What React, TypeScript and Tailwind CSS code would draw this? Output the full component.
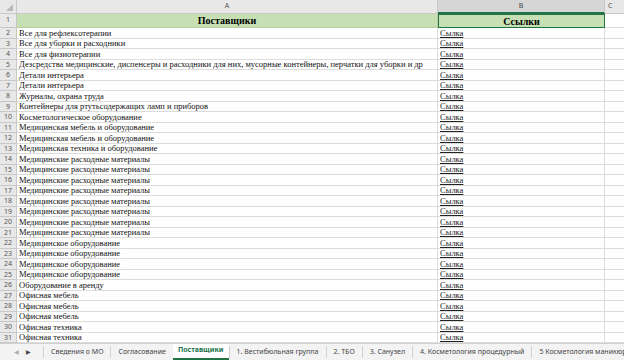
import React from "react";

const rows: string[] = [
  "Все для рефлексотерапии",
  "Все для уборки и расходники",
  "Все для физиотерапии",
  "Дезсредства медицинские, диспенсеры и расходники для них, мусорные контейнеры, перчатки для уборки и др",
  "Детали интерьера",
  "Детали интерьера",
  "Журналы, охрана труда",
  "Контейнеры для ртутьсодержащих ламп и приборов",
  "Косметологическое оборудование",
  "Медицинская мебель и оборудование",
  "Медицинская мебель и оборудование",
  "Медицинская техника и оборудование",
  "Медицинские расходные материалы",
  "Медицинские расходные материалы",
  "Медицинские расходные материалы",
  "Медицинские расходные материалы",
  "Медицинские расходные материалы",
  "Медицинские расходные материалы",
  "Медицинские расходные материалы",
  "Медицинские расходные материалы",
  "Медицинское оборудование",
  "Медицинское оборудование",
  "Медицинское оборудование",
  "Медицинское оборудование",
  "Оборудование в аренду",
  "Офисная мебель",
  "Офисная мебель",
  "Офисная мебель",
  "Офисная техника",
  "Офисная техника",
];

const tabs = [
  "Сведения о МО",
  "Согласование",
  "Поставщики",
  "1. Вестибюльная группа",
  "2. ТБО",
  "3. Санузел",
  "4. Косметология процедурный",
  "5 Косметология маникюрный",
];

const serif = { fontFamily: "'Liberation Serif', 'DejaVu Serif', serif" };
const sans = { fontFamily: "'Noto Sans', 'Liberation Sans', sans-serif" };

export default function App() {
  return (
    <div className="w-[624px] h-[360px] overflow-hidden bg-white flex flex-col">
      {/* column headers */}
      <div className="flex h-[14px] shrink-0 bg-[#e8e8e8] text-[7px] text-[#555]" style={sans}>
        <div className="w-[17px] shrink-0 border-r border-b border-[#c8c8c8] relative">
          <div className="absolute right-[3px] bottom-[2px] w-0 h-0 border-l-[7px] border-l-transparent border-b-[7px] border-b-[#b8b8b8]" />
        </div>
        <div className="w-[421px] shrink-0 border-r border-b border-[#c8c8c8] flex items-center justify-center">A</div>
        <div className="w-[167px] shrink-0 bg-[#d6d6d6] border-r border-[#c8c8c8] border-b-2 border-b-[#217346] flex items-center justify-center text-[#444]">B</div>
        <div className="flex-1 border-b border-[#c8c8c8] flex items-center pl-[3px]">C</div>
      </div>
      {/* row 1 */}
      <div className="flex h-[14px] shrink-0">
        <div className="w-[17px] shrink-0 bg-[#e8e8e8] border-r border-b border-[#c8c8c8] flex items-center justify-center text-[7px] text-[#555]" style={sans}>1</div>
        <div className="w-[421px] shrink-0 bg-[#c6e0b4] border-r border-b border-[#b5cfa3] flex items-center justify-center text-[10px] font-bold text-black" style={serif}>Поставщики</div>
        <div className="w-[167px] shrink-0 bg-[#c6e0b4] border-[1.5px] border-[#217346] flex items-center justify-center text-[10px] font-bold text-black" style={serif}>Ссылки</div>
        <div className="flex-1 border-b border-[#dcdcdc]" />
      </div>
      {/* data rows */}
      <div className="flex flex-col shrink-0">
        {rows.map((r, i) => (
          <div key={i} className="flex h-[10.5px] shrink-0">
            <div className="w-[17px] shrink-0 bg-[#e8e8e8] border-r border-b border-[#c8c8c8] flex items-center justify-center text-[7px] text-[#555] leading-none" style={sans}>{i + 2}</div>
            <div className="w-[421px] shrink-0 border-r border-b border-[#dcdcdc] flex items-center pl-[2px] text-[8.5px] leading-none text-[#111] whitespace-nowrap overflow-hidden" style={serif}>{r}</div>
            <div className="w-[167px] shrink-0 border-r border-b border-[#dcdcdc] flex items-center pl-[2px] text-[8.5px] leading-none text-[#222] underline" style={serif}>Сылка</div>
            <div className="flex-1 border-b border-[#dcdcdc]" />
          </div>
        ))}
      </div>
      {/* tab bar */}
      <div className="flex-1 flex items-stretch bg-[#f3f3f3] border-t border-[#d0d0d0] text-[7px] text-[#444] whitespace-nowrap overflow-hidden" style={sans}>
        <div className="w-[43px] shrink-0 flex items-center gap-[7px] pl-[14px] text-[6px] text-[#aaa]">
          <span>◀</span>
          <span className="text-[#444]">▶</span>
        </div>
        {tabs.map((t) => {
          const active = t === "Поставщики";
          return (
            <div
              key={t}
              className={
                active
                  ? "shrink-0 px-[5px] flex items-center bg-white font-bold text-[#217346] border-b-2 border-[#217346] -mt-px"
                  : "shrink-0 px-[7px] flex items-center border-l border-[#d0d0d0] my-[2px]"
              }
            >
              {t}
            </div>
          );
        })}
      </div>
    </div>
  );
}
